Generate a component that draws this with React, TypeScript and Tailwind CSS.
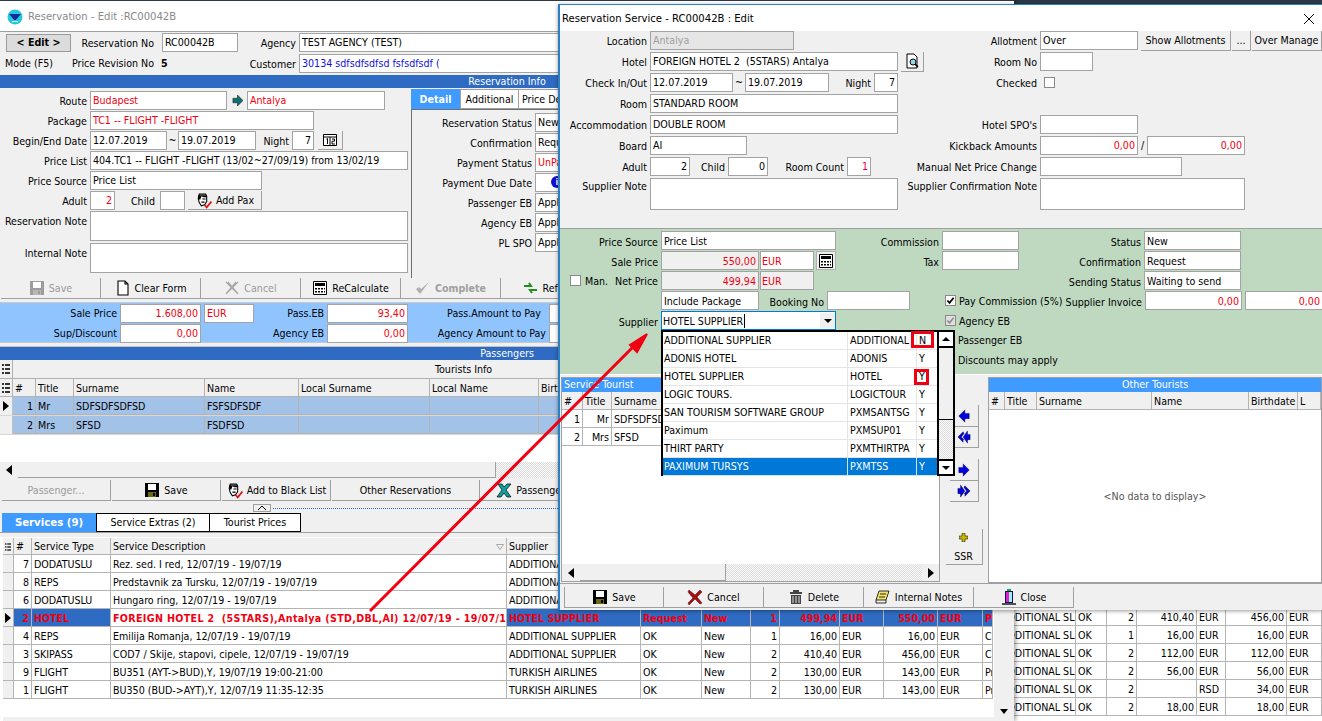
import React from "react";

type P = { c?: string; children?: React.ReactNode };

const F = ({ c = "", children }: P) => (
  <div className={`h-[19px] shrink-0 overflow-hidden whitespace-pre border border-[#a3a3a3] bg-white px-[2px] leading-[17px] ${c}`}>{children}</div>
);
const L = ({ c = "", children }: P) => (
  <div className={`shrink-0 whitespace-nowrap pr-[3px] pt-[2px] text-right ${c}`}>{children}</div>
);
const R = ({ c = "", children }: P) => <div className={`flex h-[19px] items-center ${c}`}>{children}</div>;
const Btn = ({ c = "", children }: P) => (
  <div className={`flex h-[21px] shrink-0 items-center justify-center gap-[4px] whitespace-nowrap border-r border-b border-[#a0a0a0] bg-[#f0f0f0] ${c}`}>{children}</div>
);
const Box = ({ c = "", checked, dim }: { c?: string; checked?: boolean; dim?: boolean }) => (
  <div className={`flex h-[11px] w-[11px] shrink-0 items-center justify-center border border-[#8a8a8a] bg-white ${c}`}>
    {checked && (
      <svg viewBox="0 0 10 10" className="h-[9px] w-[9px]"><path d="M1.5 5l2.4 2.6L8.5 2" fill="none" stroke={dim ? "#909090" : "#000"} strokeWidth="2" /></svg>
    )}
  </div>
);
const Ic = ({ c = "h-[16px] w-[16px]", children }: P) => (
  <svg viewBox="0 0 16 16" className={`shrink-0 ${c}`}>{children}</svg>
);
const Floppy = ({ dim }: { dim?: boolean }) => {
  const a = dim ? "#9c9c9c" : "#000";
  const b = dim ? "#b8b8b8" : "#6f6a12";
  return (
    <Ic>
      <path d="M1 1h14v14H1z" fill={a} />
      <path d="M4 2h8v6H4z" fill="#fff" />
      <path d="M4 10h8v5H4z" fill={b} />
      <path d="M9 11h2v3H9z" fill={a} />
    </Ic>
  );
};
const Doc = () => (
  <Ic><path d="M3 1h7l3 3v11H3zM10 1v3h3" fill="#fff" stroke="#000" strokeWidth="1.1" /></Ic>
);
const XGhost = () => (
  <Ic c="h-[18px] w-[16px]"><path d="M2 2l12 12M14 2L2 14M4 2l10 12M12 2L2 14" fill="none" stroke="#a8a8a8" strokeWidth="1.2" /></Ic>
);
const Calc = () => (
  <Ic>
    <path d="M1.5 1.5h13v13h-13z" fill="#fff" stroke="#000" />
    <path d="M3 3h10v3H3z" fill="#000" />
    <path d="M3 8h2v1.5H3zM6 8h2v1.5H6zM9 8h2v1.5H9zM12 8h1v1.5h-1zM3 11h2v1.5H3zM6 11h2v1.5H6zM9 11h2v1.5H9zM12 11h1v1.5h-1z" fill="#000" />
  </Ic>
);
const Face = () => (
  <Ic c="h-[17px] w-[17px]">
    <path d="M4 2h6l1 2v5l-2 3-3 1-2-3-1-4z" fill="#fff" stroke="#000" />
    <path d="M3 3h8v2H8L6 4 5 7H3z" fill="#000" />
    <path d="M7 6h3v1H7zM6 9h3v1H6z" fill="#000" />
    <path d="M9 12l2 2.5L15.5 9" fill="none" stroke="#e01010" strokeWidth="1.6" />
  </Ic>
);
const Arrow = ({ left, dbl, c = "" }: { left?: boolean; dbl?: boolean; c?: string }) => (
  <svg viewBox="0 0 16 16" className={`h-[14px] w-[14px] ${left ? "-scale-x-100" : ""} ${c}`}>
    {dbl ? (
      <path d="M1 5h3V1l5 7-5 7v-4H1zM9 2l6 6-6 6 0-3-1 0 3-3-3-4z" fill="#0000e0" stroke="#000" strokeWidth=".4" />
    ) : (
      <path d="M2 5h5V1l7 7-7 7v-4H2z" fill="#0000e0" stroke="#000" strokeWidth=".4" />
    )}
  </svg>
);

const hCell = "flex h-[18px] items-center overflow-hidden whitespace-nowrap border-r border-b border-[#b4b4b4] px-[2px] pt-[1px]";
const cell = "h-[18px] overflow-hidden whitespace-pre border-r border-b border-[#b4b4b4] px-[2px] leading-[18px]";
const GripIc = () => (
  <svg viewBox="0 0 8 10" className="mx-auto h-[10px] w-[8px]"><path d="M0 0h2v2H0zM3 0h5v2H3zM0 4h2v2H0zM3 4h5v2H3zM0 8h2v2H0zM3 8h5v2H3z" fill="#333" /></svg>
);
const Tri = ({ c = "" }: P) => (
  <svg viewBox="0 0 6 10" className={`h-[10px] w-[6px] ${c}`}><path d="M0 0l6 5-6 5z" fill="#000" /></svg>
);

const services = [
  ["7", "DODATUSLU", "Rez. sed. I red, 12/07/19 - 19/07/19", "ADDITIONAL SUPPLIER", "OK", "New", "1", "16,00", "EUR", "16,00", "EUR", "Co"],
  ["8", "REPS", "Predstavnik za Tursku, 12/07/19 - 19/07/19", "ADDITIONAL SUPPLIER", "OK", "New", "1", "16,00", "EUR", "16,00", "EUR", "Co"],
  ["6", "DODATUSLU", "Hungaro ring, 12/07/19 - 19/07/19", "ADDITIONAL SUPPLIER", "OK", "New", "1", "16,00", "EUR", "16,00", "EUR", "Co"],
  ["2", "HOTEL", "FOREIGN HOTEL 2  (5STARS),Antalya (STD,DBL,AI) 12/07/19 - 19/07/19", "HOTEL SUPPLIER", "Request", "New", "1", "499,94", "EUR", "550,00", "EUR", "Pr"],
  ["4", "REPS", "Emilija Romanja, 12/07/19 - 19/07/19", "ADDITIONAL SUPPLIER", "OK", "New", "1", "16,00", "EUR", "16,00", "EUR", "Co"],
  ["3", "SKIPASS", "COD7 / Skije, stapovi, cipele, 12/07/19 - 19/07/19", "ADDITIONAL SUPPLIER", "OK", "New", "2", "410,40", "EUR", "456,00", "EUR", "Co"],
  ["9", "FLIGHT", "BU351 (AYT->BUD),Y, 19/07/19 19:00-21:00", "TURKISH AIRLINES", "OK", "New", "2", "130,00", "EUR", "143,00", "EUR", "Pr"],
  ["1", "FLIGHT", "BU350 (BUD->AYT),Y, 12/07/19 11:35-12:35", "TURKISH AIRLINES", "OK", "New", "2", "130,00", "EUR", "143,00", "EUR", "Pr"],
];
const svcCols = "grid grid-cols-[11px_18px_79px_396px_134px_61px_49px_29px_60px_44px_54px_45px_10px]";

const back = [
  ["OK", "2", "410,40", "EUR", "456,00", "EUR"],
  ["OK", "1", "16,00", "EUR", "16,00", "EUR"],
  ["OK", "2", "112,00", "EUR", "112,00", "EUR"],
  ["OK", "2", "56,00", "EUR", "56,00", "EUR"],
  ["OK", "2", "", "RSD", "34,00", "EUR"],
  ["OK", "2", "18,00", "EUR", "18,00", "EUR"],
];

const suppliers = [
  ["ADDITIONAL SUPPLIER", "ADDITIONAL", "N"],
  ["ADONIS HOTEL", "ADONIS", "Y"],
  ["HOTEL SUPPLIER", "HOTEL", "Y"],
  ["LOGIC TOURS.", "LOGICTOUR", "Y"],
  ["SAN TOURISM SOFTWARE GROUP", "PXMSANTSG", "Y"],
  ["Paximum", "PXMSUP01", "Y"],
  ["THIRT PARTY", "PXMTHIRTPA", "Y"],
  ["PAXIMUM TURSYS", "PXMTSS", "Y"],
];

const hatch = "bg-[repeating-conic-gradient(#dcdcdc_0_25%,#fbfbfb_0_50%)] bg-[length:2px_2px]";

function MainWindow() {
  return (
    <div className="absolute left-0 top-0 flex h-[721px] w-[1014px] flex-col overflow-hidden bg-[#f0f0f0] shadow-[2px_0_4px_rgba(0,0,0,0.35)]">
      <div className="h-[1px] shrink-0 bg-[#2a3a48]" />
      <div className="flex h-[31px] shrink-0 items-center gap-[5px] border-b border-[#a0a0a0] bg-white pl-[7px] pt-[1px] text-[11.2px] text-[#8a8a8a]">
        <svg viewBox="0 0 16 16" className="h-[16px] w-[16px]">
          <circle cx="8" cy="8" r="7.5" fill="#22c8dc" />
          <path d="M2 5h12l-6 7z" fill="#142a9c" />
          <path d="M5 13q3-2 6 0" stroke="#fff" fill="none" />
        </svg>
        <span>Reservation - Edit :RC00042B</span>
      </div>

      <div className="flex h-[21px] shrink-0 items-center">
        <div className="ml-[6px] flex h-[18px] w-[65px] items-center justify-center border border-[#9a9a9a] bg-[#dcdcdc] font-bold">&lt; Edit &gt;</div>
        <L c="w-[91px] !pr-[8px]">Reservation No</L>
        <F c="w-[76px]">RC00042B</F>
        <L c="w-[61px]">Agency</L>
        <F c="w-[300px]">TEST AGENCY (TEST)</F>
      </div>
      <div className="flex h-[21px] shrink-0 items-center">
        <div className="w-[72px] pl-[5px]">Mode (F5)</div>
        <div className="w-[89px] whitespace-nowrap">Price Revision No</div>
        <div className="w-[80px] font-bold">5</div>
        <L c="w-[58px]">Customer</L>
        <F c="w-[300px] text-[#1010e0]">30134 sdfsdfsdfsd fsfsdfsdf (</F>
      </div>

      <div className="mt-[1px] h-[13px] shrink-0 bg-[#2f6bc2] text-center leading-[13px] text-white">Reservation Info</div>

      <div className="flex h-[190px] shrink-0">
        <div className="flex w-[411px] flex-col gap-[1px] pt-[3px]">
          <R>
            <L c="w-[90px]">Route</L>
            <F c="w-[137px] text-[#f00010]">Budapest</F>
            <svg viewBox="0 0 12 12" className="ml-[5px] h-[11px] w-[11px]"><path d="M1 3.5h5V0l6 6-6 6V8.5H1z" fill="#0f7070" stroke="#000" strokeWidth=".5" /></svg>
            <F c="ml-[4px] w-[138px] text-[#f00010]">Antalya</F>
          </R>
          <R>
            <L c="w-[90px]">Package</L>
            <F c="w-[224px] text-[#f00010]">TC1 -- FLIGHT -FLIGHT</F>
          </R>
          <R>
            <L c="w-[90px]">Begin/End Date</L>
            <F c="w-[77px]">12.07.2019</F>
            <div className="w-[11px] text-center">~</div>
            <F c="w-[78px]">19.07.2019</F>
            <L c="w-[36px]">Night</L>
            <F c="w-[22px] text-right">7</F>
            <Btn c="ml-[4px] w-[25px] !h-[19px]">
              <svg viewBox="0 0 14 12" className="h-[12px] w-[14px]">
                <path d="M.5.5h13v11H.5z" fill="#fff" stroke="#000" />
                <path d="M1 3h12M7 3v8M3.5 5l1-.5V10M9 5h2.5v2.2H9V10h3" fill="none" stroke="#000" strokeWidth="1" />
              </svg>
            </Btn>
          </R>
          <R>
            <L c="w-[90px]">Price List</L>
            <F c="w-[318px]">404.TC1 -- FLIGHT -FLIGHT (13/02~27/09/19) from 13/02/19</F>
          </R>
          <R>
            <L c="w-[90px]">Price Source</L>
            <F c="w-[172px]">Price List</F>
          </R>
          <R>
            <L c="w-[90px]">Adult</L>
            <F c="w-[25px] text-right text-[#f00010]">2</F>
            <L c="w-[45px] !pr-[5px]">Child</L>
            <F c="w-[25px]" />
            <Btn c="ml-[3px] w-[74px] !h-[19px]"><Face />Add Pax</Btn>
          </R>
          <div className="flex h-[30px]">
            <L c="w-[90px] !pt-[5px]">Reservation Note</L>
            <F c="!h-[30px] w-[318px]" />
          </div>
          <div className="mt-[1px] flex h-[30px]">
            <L c="w-[90px] !pt-[5px]">Internal Note</L>
            <F c="!h-[30px] w-[318px]" />
          </div>
        </div>
        <div className="flex w-[300px] flex-col pt-[1px]">
          <div className="flex h-[20px] shrink-0">
            <div className="flex w-[49px] items-center justify-center bg-[#3f9bff] font-bold text-white">Detail</div>
            <div className="flex w-[59px] items-center justify-center border border-[#a0a0a0] bg-white">Additional</div>
            <div className="flex w-[80px] items-center border border-l-0 border-[#a0a0a0] bg-white pl-[3px]">Price Detail</div>
          </div>
          <div className="flex h-[169px] flex-col gap-[1px] border-t border-l border-[#707070] pt-[3px]">
            {[
              ["Reservation Status", "New", ""],
              ["Confirmation", "Request", ""],
              ["Payment Status", "UnPaid", "text-[#f00010]"],
              ["Payment Due Date", "", ""],
              ["Passenger EB", "Apply", ""],
              ["Agency EB", "Apply", ""],
              ["PL SPO", "Apply", ""],
            ].map(([a, b, k]) => (
              <R key={a}>
                <L c="w-[123px]">{a}</L>
                <F c={`w-[60px] ${k}`}>
                  {a === "Payment Due Date" ? (
                    <div className="ml-[13px] mt-[2px] flex h-[12px] w-[12px] items-center justify-center rounded-full bg-[#1010d0] text-[9px] font-bold text-white">i</div>
                  ) : (
                    b
                  )}
                </F>
              </R>
            ))}
          </div>
        </div>
      </div>

      <div className="flex h-[22px] shrink-0 pl-[1px]">
        <Btn c="w-[100px] text-[#9a9a9a]"><Floppy dim />Save</Btn>
        <Btn c="w-[100px]"><Doc />Clear Form</Btn>
        <Btn c="w-[100px] text-[#9a9a9a]"><XGhost />Cancel</Btn>
        <Btn c="w-[100px]"><Calc />ReCalculate</Btn>
        <Btn c="w-[100px] font-bold text-[#a0a0a0]">
          <Ic><path d="M1 9l4 5 9-12-8 7-2-2z" fill="#b0b0b0" /></Ic>Complete
        </Btn>
        <Btn c="w-[100px]">
          <Ic><path d="M1 6h7l-2-3M14 10H7l2 3" fill="none" stroke="#1f8f1f" strokeWidth="2" /></Ic>Refresh
        </Btn>
      </div>

      <div className="mt-[2px] flex h-[41px] shrink-0 flex-col gap-[1px] border-t border-b border-[#c8c8c8] bg-[#90c4ff] pt-[1px] [&>div>div]:pt-0">
        <R>
          <L c="w-[120px]">Sale Price</L>
          <F c="w-[81px] text-right text-[#f00010]">1.608,00</F>
          <F c="ml-[3px] w-[50px] text-[#f00010]">EUR</F>
          <L c="w-[73px]">Pass.EB</L>
          <F c="w-[81px] text-right text-[#f00010]">93,40</F>
          <L c="w-[141px] !pr-[8px]">Pass.Amount to Pay</L>
          <F c="w-[60px]" />
        </R>
        <R>
          <L c="w-[120px]">Sup/Discount</L>
          <F c="w-[81px] text-right text-[#f00010]">0,00</F>
          <div className="w-[53px]" />
          <L c="w-[73px]">Agency EB</L>
          <F c="w-[81px] text-right text-[#f00010]">0,00</F>
          <L c="w-[141px]">Agency Amount to Pay</L>
          <F c="w-[60px]" />
        </R>
      </div>

      <div className="mt-[3px] h-[14px] shrink-0 border-t border-[#c0c0c0] bg-[#2f6bc2] text-center leading-[13px] text-white">Passengers</div>
      <div className="flex h-[19px] shrink-0 items-center border-b border-[#b0b0b0]">
        <div className="flex h-[18px] w-[13px] items-center border-r border-[#b0b0b0]"><GripIc /></div>
        <div className="ml-[422px]">Tourists Info</div>
      </div>
      <div className="h-[99px] shrink-0 bg-white">
        <div className="grid h-[18px] grid-cols-[13px_23px_38px_131px_94px_131px_109px_60px] bg-[#f0f0f0]">
          <div className={hCell}><GripIc /></div>
          {["#", "Title", "Surname", "Name", "Local Surname", "Local Name", "Birthdate"].map((t) => (
            <div key={t} className={hCell}>{t}</div>
          ))}
        </div>
        {[["1", "Mr", "SDFSDFSDFSD", "FSFSDFSDF"], ["2", "Mrs", "SFSD", "FSDFSD"]].map((r) => (
          <div key={r[0]} className="grid h-[19px] grid-cols-[13px_23px_38px_131px_94px_131px_109px_60px] border-b border-[#d8d8d8]">
            <div className="flex h-[18px] items-center justify-center border-r border-[#c0c0c0] bg-[#f0f0f0]">{r[0] === "1" && <Tri />}</div>
            <div className={`${cell} bg-[#a3c2e8] text-right`}>{r[0]}</div>
            <div className={`${cell} bg-[#a3c2e8]`}>{r[1]}</div>
            <div className={`${cell} bg-[#a3c2e8]`}>{r[2]}</div>
            <div className={`${cell} bg-[#a3c2e8]`}>{r[3]}</div>
            <div className={`${cell} bg-[#a3c2e8]`} />
            <div className={`${cell} bg-[#a3c2e8]`} />
            <div className={`${cell} bg-[#a3c2e8]`} />
          </div>
        ))}
        <div className="mt-[27px] flex h-[16px]">
          <div className="flex w-[18px] items-center justify-center bg-[#f0f0f0]"><Tri c="-scale-x-100" /></div>
          <div className="w-[478px] border-r border-b border-[#a0a0a0] bg-[#f0f0f0]" />
          <div className={`flex-1 ${hatch}`} />
        </div>
      </div>

      <div className="mt-[2px] flex h-[21px] shrink-0 gap-[1px] pl-[2px]">
        <Btn c="w-[109px] text-[#9a9a9a]">Passenger...</Btn>
        <Btn c="w-[109px]"><Floppy />Save</Btn>
        <Btn c="w-[109px]"><Face />Add to Black List</Btn>
        <Btn c="w-[148px]">Other Reservations</Btn>
        <Btn c="w-[120px]">
          <Ic><path d="M2 2h4l2 3 3-3h4l-5 6 5 7h-4L8 11l-3 4H1l5-7z" fill="#10a0a0" stroke="#000" strokeWidth=".7" /></Ic>Passenger List
        </Btn>
      </div>

      <div className="mt-[3px] flex h-[8px] shrink-0 items-center">
        <div className="ml-[253px] flex h-[8px] w-[18px] items-center justify-center border border-[#a0a0a0]">
          <svg viewBox="0 0 8 4" className="h-[4px] w-[8px]"><path d="M0 4l4-4 4 4" fill="none" stroke="#000" /></svg>
        </div>
        <div className="ml-[2px] flex-1 border-t border-dotted border-[#2f6bc2]" />
      </div>

      <div className="mt-[1px] flex h-[20px] shrink-0 border-b border-[#a0a0a0] pl-[2px]">
        <div className="flex w-[94px] items-center justify-center bg-[#3f9bff] text-[11.3px] font-bold text-white">Services (9)</div>
        <div className="flex w-[114px] items-center justify-center border border-black bg-white">Service Extras (2)</div>
        <div className="flex w-[91px] items-center justify-center border border-l-0 border-black bg-white">Tourist Prices</div>
      </div>

      <div className="mt-[4px] flex flex-1 bg-white">
        <div className="w-[3px] shrink-0" />
        <div className="w-[991px] shrink-0">
          <div className={`${svcCols} mt-[1px] bg-[#f0f0f0]`}>
            <div className={`${hCell} !h-[17px]`}><GripIc /></div>
            {["#", "Service Type", "Service Description", "Supplier", "", "", "", "", "", "", "", ""].map((t, i) => (
              <div key={i} className={`${hCell} !h-[17px] ${i === 2 ? "justify-between" : ""}`}>
                {t}
                {i === 2 && <svg viewBox="0 0 8 6" className="h-[6px] w-[8px]"><path d="M.5.5h7l-3.5 5z" fill="none" stroke="#aaa" /></svg>}
              </div>
            ))}
          </div>
          {services.map((r) => {
            const on = r[1] === "HOTEL";
            const base = on ? "bg-[#2f6bc2] text-[#f00010] font-bold" : "";
            const rt = "text-right";
            return (
              <div key={r[0]} className={svcCols}>
                <div className="flex h-[18px] items-center justify-center border-r border-b border-[#b4b4b4] bg-[#f0f0f0]">{on && <Tri />}</div>
                <div className={`${cell} ${rt} ${base}`}>{r[0]}</div>
                <div className={`${cell} ${base}`}>{r[1]}</div>
                <div className={`${cell} ${on ? "font-bold tracking-[0.35px] text-[#f00010]" : ""}`}>{r[2]}</div>
                {r.slice(3).map((v, k) => (
                  <div key={k} className={`${cell} ${base} ${k === 3 || k === 4 || k === 6 ? rt : ""}`}>{v}</div>
                ))}
              </div>
            );
          })}
          <div className="mt-[18px] flex h-[6px] bg-[#f0f0f0]" />
        </div>
        <div className="flex w-[20px] shrink-0 flex-col items-center justify-end bg-[#f0f0f0] pb-[9px]">
          <svg viewBox="0 0 8 5" className="h-[5px] w-[8px]"><path d="M0 0h8L4 5z" fill="#000" /></svg>
        </div>
      </div>
    </div>
  );
}

function BackWindow() {
  return (
    <div className="absolute left-[1014px] top-[610px] h-[111px] w-[308px] overflow-hidden bg-white">
      {back.map((r, i) => (
        <div key={i} className={`grid grid-cols-[62px_31px_30px_60px_29px_61px_35px] ${i === 0 ? "-mt-[2px]" : ""}`}>
          <div className={cell + " !px-0"}><div className="-ml-[13px]">ADDITIONAL SL</div></div>
          {r.map((v, k) => (
            <div key={k} className={`${cell} ${k === 1 || k === 2 || k === 4 ? "text-right" : ""}`}>{v}</div>
          ))}
        </div>
      ))}
    </div>
  );
}

function Dialog() {
  return (
    <div className="absolute left-[558px] top-[4px] flex h-[606px] w-[764px] flex-col overflow-hidden border-t border-l-2 border-[#2b7fc4] bg-[#f0f0f0] shadow-[0_1px_4px_rgba(0,0,0,0.4)]">
      <div className="flex h-[26px] shrink-0 items-center justify-between bg-white pl-[2px] pr-[8px] pt-[1px] text-[11.2px]">
        <span>Reservation Service - RC00042B : Edit</span>
        <svg viewBox="0 0 10 10" className="h-[10px] w-[10px]"><path d="M0 0l10 10M10 0L0 10" stroke="#000" strokeWidth="1" /></svg>
      </div>

      <div className="flex h-[197px] shrink-0 flex-col gap-[2px]">
        <R>
          <L c="w-[90px]">Location</L>
          <F c="w-[144px] !bg-[#e6e6e6] text-[#a0a0a0]">Antalya</F>
          <L c="w-[246px]">Allotment</L>
          <F c="w-[98px]">Over</F>
          <Btn c="ml-[3px] w-[90px] !h-[20px]">Show Allotments</Btn>
          <Btn c="ml-[1px] w-[19px] !h-[20px]">...</Btn>
          <Btn c="ml-[1px] w-[70px] !h-[20px]">Over Manage</Btn>
        </R>
        <R>
          <L c="w-[90px]">Hotel</L>
          <F c="w-[248px]">FOREIGN HOTEL 2  (5STARS) Antalya</F>
          <Btn c="ml-[3px] w-[23px] !h-[20px]">
            <Ic><path d="M3 1h7l3 3v11H3z" fill="#fff" stroke="#000" /><circle cx="9" cy="9" r="3" fill="#8fd8e8" stroke="#000" /><path d="M11 11l3 3" stroke="#000" strokeWidth="1.6" /></Ic>
          </Btn>
          <L c="w-[116px]">Room No</L>
          <F c="w-[53px]" />
        </R>
        <R>
          <L c="w-[90px]">Check In/Out</L>
          <F c="w-[83px]">12.07.2019</F>
          <div className="w-[12px] text-center">~</div>
          <F c="w-[84px]">19.07.2019</F>
          <L c="w-[45px]">Night</L>
          <F c="w-[24px] text-right">7</F>
          <L c="w-[142px]">Checked</L>
          <Box c="ml-[4px]" />
        </R>
        <R>
          <L c="w-[90px]">Room</L>
          <F c="w-[248px]">STANDARD ROOM</F>
        </R>
        <R>
          <L c="w-[90px]">Accommodation</L>
          <F c="w-[248px]">DOUBLE ROOM</F>
          <L c="w-[142px]">Hotel SPO's</L>
          <F c="w-[98px]" />
        </R>
        <R>
          <L c="w-[90px]">Board</L>
          <F c="w-[97px]">AI</F>
          <L c="w-[293px]">Kickback Amounts</L>
          <F c="w-[98px] text-right text-[#f00010]">0,00</F>
          <div className="w-[9px] text-center">/</div>
          <F c="w-[98px] text-right text-[#f00010]">0,00</F>
        </R>
        <R>
          <L c="w-[90px]">Adult</L>
          <F c="w-[40px] text-right">2</F>
          <L c="w-[38px]">Child</L>
          <F c="w-[40px] text-right">0</F>
          <L c="w-[79px]">Room Count</L>
          <F c="w-[24px] text-right text-[#f00040]">1</F>
          <L c="w-[169px]">Manual Net Price Change</L>
          <F c="w-[142px]" />
        </R>
        <div className="flex h-[32px]">
          <L c="w-[90px] !pt-[3px]">Supplier Note</L>
          <F c="!h-[32px] w-[248px]" />
          <L c="w-[142px] !pt-[3px]">Supplier Confirmation Note</L>
          <F c="!h-[32px] w-[205px]" />
        </div>
      </div>

      <div className="flex h-[146px] shrink-0 flex-col gap-[1px] border-t border-[#a0a0a0] bg-[#bfd9c0] pt-[2px] [&>div>div]:leading-[18px]">
        <R>
          <L c="w-[101px]">Price Source</L>
          <F c="w-[175px]">Price List</F>
          <L c="w-[106px]">Commission</L>
          <F c="w-[77px]" />
          <L c="w-[125px]">Status</L>
          <F c="w-[97px]">New</F>
        </R>
        <R>
          <L c="w-[101px]">Sale Price</L>
          <F c="w-[98px] !bg-[#f0f0f0] text-right text-[#f00010]">550,00</F>
          <F c="ml-[1px] w-[54px] !px-[1px] text-[#f00010]">EUR</F>
          <div className="ml-[2px] flex h-[19px] w-[20px] items-center justify-center border border-[#b0b0b0] bg-[#f0f0f0]"><Calc /></div>
          <L c="w-[106px]">Tax</L>
          <F c="w-[77px]" />
          <L c="w-[125px]">Confirmation</L>
          <F c="w-[97px]">Request</F>
        </R>
        <R>
          <div className="flex w-[101px] shrink-0 items-center pl-[10px]">
            <Box />
            <span className="ml-[4px]">Man.</span>
            <span className="ml-auto pr-[3px]">Net Price</span>
          </div>
          <F c="w-[98px] !bg-[#f0f0f0] text-right text-[#f00010]">499,94</F>
          <F c="ml-[1px] w-[54px] !bg-[#f0f0f0] !px-[1px] text-[#f00010]">EUR</F>
          <div className="w-[205px] shrink-0" />
          <L c="w-[125px]">Sending Status</L>
          <F c="w-[97px]">Waiting to send</F>
        </R>
        <R>
          <div className="w-[101px] shrink-0" />
          <F c="w-[98px]">Include Package</F>
          <L c="w-[68px]">Booking No</L>
          <F c="w-[83px]" />
          <Box checked c="ml-[35px]" />
          <div className="ml-[3px] w-[106px] shrink-0 whitespace-nowrap">Pay Commission (5%)</div>
          <L c="w-[80px]">Supplier Invoice</L>
          <F c="w-[97px] text-right text-[#f00010]">0,00</F>
          <F c="ml-[3px] w-[78px] text-right text-[#f00010]">0,00</F>
        </R>
        <R>
          <L c="w-[101px]">Supplier</L>
          <div className="flex h-[19px] w-[175px] items-center border border-[#0078d7] bg-white pl-[1px]">
            <span className="border-r border-black pr-[1px] leading-[14px]">HOTEL SUPPLIER</span>
            <div className="ml-auto flex h-[15px] w-[15px] items-center justify-center bg-[#f0f0f0]">
              <svg viewBox="0 0 8 4" className="h-[4px] w-[8px]"><path d="M0 0h8L4 4z" fill="#000" /></svg>
            </div>
          </div>
          <Box checked dim c="ml-[109px] !bg-[#e0e0e0]" />
          <div className="ml-[3px]">Agency EB</div>
        </R>
        <R c="pl-[398px]">Passenger EB</R>
        <R c="pl-[398px]">Discounts may apply</R>
      </div>

      <div className="flex h-[209px] shrink-0 border-t border-white pt-[2px] pl-[1px]">
        <div className="flex h-[205px] w-[379px] shrink-0 flex-col border border-[#a0a0a0] bg-white">
          <div className="h-[14px] shrink-0 bg-[#3f9bff] pl-[2px] leading-[13px] text-white">Service Tourist</div>
          <div className="grid grid-cols-[21px_29px_120px_1fr] bg-[#f0f0f0]">
            <div className={hCell}>#</div>
            <div className={hCell}>Title</div>
            <div className={hCell}>Surname</div>
            <div className={hCell}>Name</div>
          </div>
          {[["1", "Mr", "SDFSDFSDFSD"], ["2", "Mrs", "SFSD"]].map((r) => (
            <div key={r[0]} className="grid grid-cols-[21px_29px_120px_1fr]">
              <div className={`${cell} text-right`}>{r[0]}</div>
              <div className={`${cell} text-right`}>{r[1]}</div>
              <div className={cell}>{r[2]}</div>
              <div className={cell} />
            </div>
          ))}
          <div className="mt-auto flex h-[17px]">
            <div className="flex w-[18px] items-center justify-center bg-[#f0f0f0]"><Tri c="-scale-x-100" /></div>
            <div className="w-[146px] border-r border-b border-[#a0a0a0] bg-[#f0f0f0]" />
            <div className={`flex-1 ${hatch}`} />
            <div className="flex w-[17px] items-center justify-center bg-[#f0f0f0]"><Tri /></div>
          </div>
        </div>
        <div className="flex h-[204px] w-[48px] shrink-0 flex-col items-center">
          <Btn c="mt-[28px] w-[29px] !h-[22px]"><Arrow left /></Btn>
          <Btn c="w-[29px] !h-[21px]"><Arrow left dbl /></Btn>
          <Btn c="mt-[11px] w-[29px] !h-[22px]"><Arrow /></Btn>
          <Btn c="w-[29px] !h-[21px]"><Arrow dbl /></Btn>
          <div className="mt-[27px] flex h-[36px] w-[37px] flex-col items-center border-r border-b border-[#a0a0a0] pt-[4px]">
            <svg viewBox="0 0 9 9" className="h-[9px] w-[9px]"><path d="M3 0h3v3h3v3H6v3H3V6H0V3h3z" fill="#c8b400" stroke="#000" strokeWidth=".5" /></svg>
            <span className="mt-[9px]">SSR</span>
          </div>
        </div>
        <div className="flex h-[206px] flex-1 flex-col border border-[#a0a0a0] bg-white">
          <div className="h-[14px] shrink-0 bg-[#3f9bff] text-center leading-[13px] text-white">Other Tourists</div>
          <div className="grid grid-cols-[16px_32px_115px_97px_49px_1fr] bg-[#f0f0f0]">
            {["#", "Title", "Surname", "Name", "Birthdate", "L"].map((t) => (
              <div key={t} className={hCell}>{t}</div>
            ))}
          </div>
          <div className="flex flex-1 items-center justify-center text-[#555]">&lt;No data to display&gt;</div>
        </div>
      </div>

      <div className="flex flex-1 border-t border-[#a0a0a0] pl-[4px] pt-[3px]">
        <Btn c="w-[100px] border-l"><Floppy />Save</Btn>
        <Btn c="w-[100px]">
          <Ic><path d="M2 1l6 5 5-5 2 2-5 5 5 6-2 1-5-5-6 6-1-2 5-5-5-6z" fill="#a01010" stroke="#600" strokeWidth=".5" /></Ic>Cancel
        </Btn>
        <Btn c="w-[100px]">
          <Ic><path d="M5 1h6v2h3v2H2V3h3zM3 6h10v9H3z" fill="#444" /><path d="M5 7v7M8 7v7M11 7v7" stroke="#ddd" /></Ic>Delete
        </Btn>
        <Btn c="w-[110px]">
          <Ic><path d="M4 2h10l-3 9H1z" fill="#f0e070" stroke="#000" strokeWidth=".8" /><path d="M1 11v3h10l0-3M5 5h6M4 8h6" fill="none" stroke="#000" strokeWidth=".8" /></Ic>Internal Notes
        </Btn>
        <Btn c="w-[100px]">
          <Ic><path d="M6 0h4v2H6z" fill="#10b040" /><path d="M4 2h8v12H4z" fill="#101060" /><path d="M5 3h3v10H5z" fill="#e020d0" /><path d="M8 3h3v10H8z" fill="#a0f0f0" /><path d="M1 14h14v2H1z" fill="#505050" /></Ic>Close
        </Btn>
      </div>
    </div>
  );
}

function Dropdown() {
  return (
    <div className="absolute left-[661px] top-[330px] flex h-[146px] w-[294px] border-2 border-black bg-white">
      <div className="w-[275px]">
        {suppliers.map((r, i) => {
          const s = i === 7;
          const line = s ? "border-white/80" : "border-[#e4e4e4]";
          return (
            <div key={r[0]} className={`grid h-[18px] grid-cols-[185px_69px_20px] border-b ${line} ${s ? "bg-[#0078d7] text-white" : ""}`}>
              <div className={`overflow-hidden whitespace-nowrap border-r ${line} pl-[1px] leading-[17px]`}>{r[0]}</div>
              <div className={`overflow-hidden whitespace-nowrap border-r ${line} pl-[2px] leading-[17px]`}>{r[1]}</div>
              <div className="pl-[2px] leading-[17px]">{r[2]}</div>
            </div>
          );
        })}
      </div>
      <div className="flex w-[17px] flex-col border-l-2 border-black bg-[#f0f0f0]">
        <div className="flex h-[16px] items-center justify-center border-b-2 border-black bg-white">
          <svg viewBox="0 0 8 4" className="h-[4px] w-[8px]"><path d="M0 4h8L4 0z" fill="#000" /></svg>
        </div>
        <div className="h-[72px] border-b border-black" />
        <div className={`flex-1 ${hatch}`} />
        <div className="flex h-[15px] items-center justify-center border-t-2 border-black bg-white">
          <svg viewBox="0 0 8 4" className="h-[4px] w-[8px]"><path d="M0 0h8L4 4z" fill="#000" /></svg>
        </div>
      </div>
    </div>
  );
}

export default function App() {
  return (
    <div className="relative h-[721px] w-[1322px] overflow-hidden bg-[#2a3a48] text-[10.6px] leading-none text-black [font-family:'DejaVu_Sans_Condensed','Liberation_Sans',sans-serif]">
      <BackWindow />
      <MainWindow />
      <Dialog />
      <svg viewBox="0 0 1322 721" className="pointer-events-none absolute left-0 top-0 h-[721px] w-[1322px]">
        <path d="M370 611L636 344" stroke="#f00010" strokeWidth="3" />
        <path d="M647 334L630 345L637 352z" fill="#f00010" stroke="#f00010" strokeWidth="2" />
      </svg>
      <Dropdown />
      <div className="absolute left-[911px] top-[331px] h-[17px] w-[23px] border-[3px] border-[#f00010]" />
      <div className="absolute left-[914px] top-[369px] h-[16px] w-[15px] border-[3px] border-[#f00010]" />
    </div>
  );
}
